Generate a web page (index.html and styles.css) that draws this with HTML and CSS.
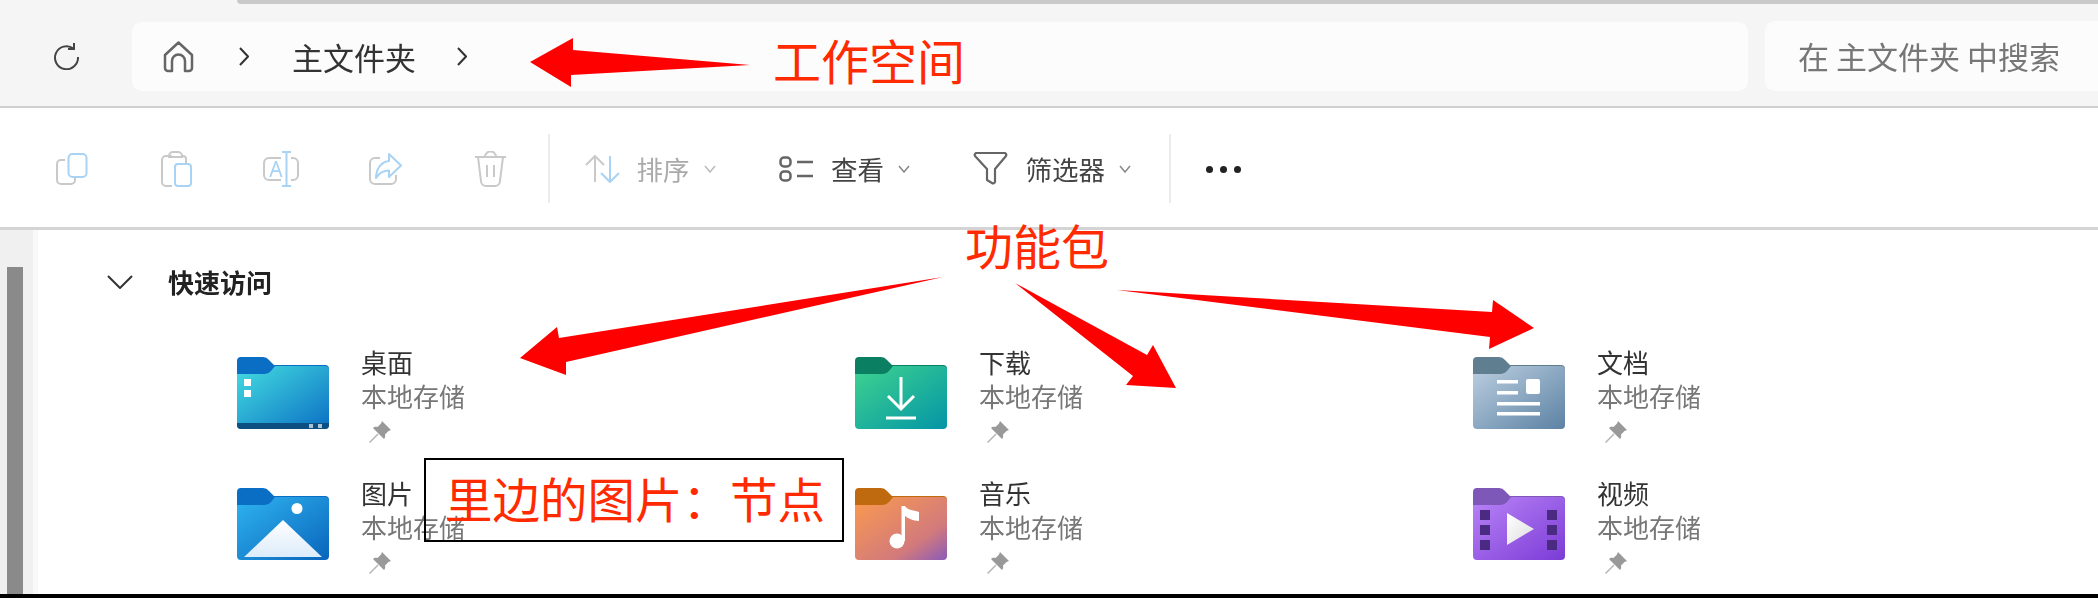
FILE: index.html

```html
<!DOCTYPE html>
<html lang="zh-CN">
<head>
  <meta charset="UTF-8">
  <title>主文件夹</title>
  <link rel="stylesheet" href="styles.css">
</head>
<body>
  <div class="topbar">
    <div class="tab-edge"></div>
    <div class="nav-row">
      <svg class="refresh" width="27" height="28" viewBox="0 0 27 28" fill="none" stroke="#444" stroke-width="2">
        <path d="M20.4 6.5A11.5 11.5 0 1 0 25 15"/>
        <path d="M21 1V7H15"/>
      </svg>
      <div class="address">
        <svg width="31" height="32" viewBox="0 0 31 32" fill="none" stroke="#666" stroke-width="2.5" stroke-linejoin="round">
          <path d="M2 14 15.5 1.5 29 14V27a3 3 0 0 1-3 3H22V20a6.5 6.5 0 0 0-13 0V30H5a3 3 0 0 1-3-3Z"/>
        </svg>
        <svg class="crumb-1" width="10" height="19" viewBox="0 0 10 19" fill="none" stroke="#333" stroke-width="2"><path d="M1 1 9 9.5 1 18"/></svg>
        <span class="crumb-text">主文件夹</span>
        <svg class="crumb-2" width="10" height="19" viewBox="0 0 10 19" fill="none" stroke="#333" stroke-width="2"><path d="M1 1 9 9.5 1 18"/></svg>
      </div>
      <div class="search">在 主文件夹 中搜索</div>
    </div>
  </div>

  <div class="toolbar">
    <div class="tool">
      <svg width="32" height="32" viewBox="0 0 32 32" fill="none" stroke-width="2">
        <path stroke="#c9c9c9" d="M9 7H5a4 4 0 0 0-4 4V27a4 4 0 0 0 4 4H15a4 4 0 0 0 4-4V25"/>
        <rect stroke="#a8d3f4" x="12.5" y="1" width="18" height="23" rx="4"/>
      </svg>
    </div>
    <div class="tool">
      <svg width="31" height="36" viewBox="0 0 31 36" fill="none" stroke-width="2">
        <path stroke="#c9c9c9" d="M11 5H5a4 4 0 0 0-4 4V31a4 4 0 0 0 4 4h6M20 5h2a3 3 0 0 1 3 3v4M8 5a4 4 0 0 1 4-4h5a4 4 0 0 1 4 4v1H8Z"/>
        <rect stroke="#a8d3f4" x="14" y="13" width="16" height="22" rx="3"/>
      </svg>
    </div>
    <div class="tool">
      <svg width="36" height="36" viewBox="0 0 36 36" fill="none" stroke-width="2">
        <path stroke="#c9c9c9" d="M18 7H6a5 5 0 0 0-5 5V24a5 5 0 0 0 5 5H18M28 7h2a5 5 0 0 1 5 5V24a5 5 0 0 1-5 5H28"/>
        <path stroke="#a8d3f4" d="M19 1H28M23.500 1V35M19 35H28"/>
        <text class="rename-a" x="13" y="26" text-anchor="middle">A</text>
      </svg>
    </div>
    <div class="tool">
      <svg width="33" height="32" viewBox="0 0 33 32" fill="none" stroke-width="2">
        <path stroke="#c9c9c9" d="M11 5H6a5 5 0 0 0-5 5V26a5 5 0 0 0 5 5H22a5 5 0 0 0 5-5V22"/>
        <path stroke="#a8d3f4" stroke-linejoin="round" d="M20 1 32 12.500 20 24V17.500C14 17.500 10 20 7 25 7 16 12 9 20 8Z"/>
      </svg>
    </div>
    <div class="tool">
      <svg width="33" height="36" viewBox="0 0 33 36" fill="none" stroke="#c9c9c9" stroke-width="2">
        <path d="M1 6H32M11 6a5.500 5.500 0 0 1 11 0M4 6 7 30a5 5 0 0 0 5 5H21a5 5 0 0 0 5-5L29 6M13 14V26M20 14V26"/>
      </svg>
    </div>
    <div class="separator"></div>
    <div class="menu menu-sort">
      <svg width="35" height="28" viewBox="0 0 35 28" fill="none" stroke-width="2">
        <path stroke="#c9c9c9" d="M1 10 10 1 19 10M10 1V27"/>
        <path stroke="#a8d3f4" d="M16 18 25 27 34 18M25 1V27"/>
      </svg>
      <span class="menu-label disabled">排序</span>
      <svg class="caret" width="12" height="8" viewBox="0 0 12 8" fill="none" stroke="#bbb" stroke-width="1.500"><path d="M1 1 6 7 11 1"/></svg>
    </div>
    <div class="menu">
      <svg width="35" height="26" viewBox="0 0 35 26" fill="none" stroke="#666" stroke-width="2.500">
        <rect x="1.500" y="1.500" width="10" height="9" rx="3.500"/>
        <rect x="1.500" y="15.500" width="10" height="9" rx="3.500"/>
        <path d="M18 6H34M18 20H34"/>
      </svg>
      <span class="menu-label">查看</span>
      <svg class="caret" width="12" height="8" viewBox="0 0 12 8" fill="none" stroke="#888" stroke-width="1.500"><path d="M1 1 6 7 11 1"/></svg>
    </div>
    <div class="menu">
      <svg width="35" height="33" viewBox="0 0 35 33" fill="none" stroke="#666" stroke-width="2.200" stroke-linejoin="round">
        <path d="M4 1H31a2 2 0 0 1 2 3L22 17V30a2 2 0 0 1-3 1L14 28V17L2 4A2 2 0 0 1 4 1Z"/>
      </svg>
      <span class="menu-label">筛选器</span>
      <svg class="caret" width="12" height="8" viewBox="0 0 12 8" fill="none" stroke="#888" stroke-width="1.500"><path d="M1 1 6 7 11 1"/></svg>
    </div>
    <div class="separator separator-2"></div>
    <div class="dots"><i></i><i></i><i></i></div>
  </div>

  <div class="main">
    <div class="rail"><div class="thumb"></div></div>
    <div class="rail-edge"></div>
    <div class="content">
      <div class="section-head">
        <svg width="26" height="14" viewBox="0 0 26 14" fill="none" stroke="#333" stroke-width="2"><path d="M1 1 13 13 25 1"/></svg>
        <span class="section-title">快速访问</span>
      </div>
      <div class="grid">
        <div class="item">
          <svg class="folder" width="92" height="72" viewBox="0 0 92 72">
            <defs><linearGradient id="g-desk" x1="0" y1="0" x2="1" y2="1"><stop offset="0" stop-color="#44dde0"/><stop offset="1" stop-color="#0b6fc4"/></linearGradient></defs>
            <path fill="#0a6ec4" d="M4 0H26a8 8 0 0 1 6 3L37 8H88a4 4 0 0 1 4 4V30H0V4A4 4 0 0 1 4 0Z"/>
            <path fill="url(#g-desk)" d="M0 17H28a8 8 0 0 0 6-3L38 9H88a4 4 0 0 1 4 4V68a4 4 0 0 1-4 4H4a4 4 0 0 1-4-4Z"/>
            <path fill="#0c4f80" d="M0 66H92V68a4 4 0 0 1-4 4H4a4 4 0 0 1-4-4Z"/>
            <rect fill="#fff" x="7" y="22" width="7" height="7"/>
            <rect fill="#fff" x="7" y="33" width="7" height="7"/>
            <rect fill="#a9c4d6" x="72" y="67" width="4" height="4"/>
            <rect fill="#a9c4d6" x="81" y="67" width="4" height="4"/>
          </svg>
          <div class="item-text">
            <div class="item-name">桌面</div>
            <div class="item-sub">本地存储</div>
            <svg class="pin" width="22" height="22" viewBox="0 0 22 22"><path fill="#999" d="M13 0 22 9 19.500 10 16 13.500C16.500 15.500 16 17 15 18L4 7C5 6 6.500 5.500 8.500 6L12 2.500Z"/><path stroke="#b5b5b5" stroke-width="1.500" d="M9 13 .5 21.500"/></svg>
          </div>
        </div>
        <div class="item">
          <svg class="folder" width="92" height="72" viewBox="0 0 92 72">
            <defs><linearGradient id="g-down" x1="0" y1="0" x2="1" y2="1"><stop offset="0" stop-color="#3fd38f"/><stop offset="1" stop-color="#0395a6"/></linearGradient></defs>
            <path fill="#0a7f62" d="M4 0H26a8 8 0 0 1 6 3L37 8H88a4 4 0 0 1 4 4V30H0V4A4 4 0 0 1 4 0Z"/>
            <path fill="url(#g-down)" d="M0 17H28a8 8 0 0 0 6-3L38 9H88a4 4 0 0 1 4 4V68a4 4 0 0 1-4 4H4a4 4 0 0 1-4-4Z"/>
            <path fill="none" stroke="#fff" stroke-width="3" d="M46 20V52M33 39 46 52 59 39M31 61H61"/>
          </svg>
          <div class="item-text">
            <div class="item-name">下载</div>
            <div class="item-sub">本地存储</div>
            <svg class="pin" width="22" height="22" viewBox="0 0 22 22"><path fill="#999" d="M13 0 22 9 19.500 10 16 13.500C16.500 15.500 16 17 15 18L4 7C5 6 6.500 5.500 8.500 6L12 2.500Z"/><path stroke="#b5b5b5" stroke-width="1.500" d="M9 13 .5 21.500"/></svg>
          </div>
        </div>
        <div class="item">
          <svg class="folder" width="92" height="72" viewBox="0 0 92 72">
            <defs><linearGradient id="g-docs" x1="0" y1="0" x2="1" y2="1"><stop offset="0" stop-color="#bccfe0"/><stop offset="1" stop-color="#5c82a4"/></linearGradient></defs>
            <path fill="#5f7f90" d="M4 0H26a8 8 0 0 1 6 3L37 8H88a4 4 0 0 1 4 4V30H0V4A4 4 0 0 1 4 0Z"/>
            <path fill="url(#g-docs)" d="M0 17H28a8 8 0 0 0 6-3L38 9H88a4 4 0 0 1 4 4V68a4 4 0 0 1-4 4H4a4 4 0 0 1-4-4Z"/>
            <g fill="#fff">
              <rect x="24" y="23" width="21" height="3.500"/>
              <rect x="24" y="34" width="21" height="3.500"/>
              <rect x="53" y="22" width="14" height="15" rx="2"/>
              <rect x="24" y="45" width="43" height="3.500"/>
              <rect x="24" y="55" width="43" height="3.500"/>
            </g>
          </svg>
          <div class="item-text">
            <div class="item-name">文档</div>
            <div class="item-sub">本地存储</div>
            <svg class="pin" width="22" height="22" viewBox="0 0 22 22"><path fill="#999" d="M13 0 22 9 19.500 10 16 13.500C16.500 15.500 16 17 15 18L4 7C5 6 6.500 5.500 8.500 6L12 2.500Z"/><path stroke="#b5b5b5" stroke-width="1.500" d="M9 13 .5 21.500"/></svg>
          </div>
        </div>
        <div class="item">
          <svg class="folder" width="92" height="72" viewBox="0 0 92 72">
            <defs>
              <linearGradient id="g-pics" x1="0" y1="0" x2="1" y2="1"><stop offset="0" stop-color="#2fb4f0"/><stop offset="1" stop-color="#0964bb"/></linearGradient>
              <linearGradient id="g-peak" x1="0" y1="0" x2="0" y2="1"><stop offset="0" stop-color="#fff"/><stop offset="1" stop-color="#dcecfa"/></linearGradient>
            </defs>
            <path fill="#0a6ec4" d="M4 0H26a8 8 0 0 1 6 3L37 8H88a4 4 0 0 1 4 4V30H0V4A4 4 0 0 1 4 0Z"/>
            <path fill="url(#g-pics)" d="M0 17H28a8 8 0 0 0 6-3L38 9H88a4 4 0 0 1 4 4V68a4 4 0 0 1-4 4H4a4 4 0 0 1-4-4Z"/>
            <circle fill="#fff" cx="60" cy="20.500" r="5.500"/>
            <path fill="url(#g-peak)" d="M46 32 85 69H7Z"/>
          </svg>
          <div class="item-text">
            <div class="item-name">图片</div>
            <div class="item-sub">本地存储</div>
            <svg class="pin" width="22" height="22" viewBox="0 0 22 22"><path fill="#999" d="M13 0 22 9 19.500 10 16 13.500C16.500 15.500 16 17 15 18L4 7C5 6 6.500 5.500 8.500 6L12 2.500Z"/><path stroke="#b5b5b5" stroke-width="1.500" d="M9 13 .5 21.500"/></svg>
          </div>
        </div>
        <div class="item">
          <svg class="folder" width="92" height="72" viewBox="0 0 92 72">
            <defs><linearGradient id="g-music" x1="0" y1="0" x2="1" y2="1"><stop offset="0" stop-color="#fb9a4e"/><stop offset=".7" stop-color="#d27a7c"/><stop offset="1" stop-color="#8a5bb8"/></linearGradient></defs>
            <path fill="#c06a10" d="M4 0H26a8 8 0 0 1 6 3L37 8H88a4 4 0 0 1 4 4V30H0V4A4 4 0 0 1 4 0Z"/>
            <path fill="url(#g-music)" d="M0 17H28a8 8 0 0 0 6-3L38 9H88a4 4 0 0 1 4 4V68a4 4 0 0 1-4 4H4a4 4 0 0 1-4-4Z"/>
            <circle fill="#fff" cx="42" cy="53" r="7.500"/>
            <path fill="#fff" d="M46.500 53V18L50 18C52 22 58 22 64 24V33C58 33 53 30 50 28V53Z"/>
          </svg>
          <div class="item-text">
            <div class="item-name">音乐</div>
            <div class="item-sub">本地存储</div>
            <svg class="pin" width="22" height="22" viewBox="0 0 22 22"><path fill="#999" d="M13 0 22 9 19.500 10 16 13.500C16.500 15.500 16 17 15 18L4 7C5 6 6.500 5.500 8.500 6L12 2.500Z"/><path stroke="#b5b5b5" stroke-width="1.500" d="M9 13 .5 21.500"/></svg>
          </div>
        </div>
        <div class="item">
          <svg class="folder" width="92" height="72" viewBox="0 0 92 72">
            <defs>
              <linearGradient id="g-video" x1="0" y1="0" x2="1" y2="1"><stop offset="0" stop-color="#b984f7"/><stop offset="1" stop-color="#7b3bd6"/></linearGradient>
              <linearGradient id="g-play" x1="0" y1="0" x2="1" y2="1"><stop offset="0" stop-color="#fff"/><stop offset="1" stop-color="#ddd"/></linearGradient>
            </defs>
            <path fill="#7e58b8" d="M4 0H26a8 8 0 0 1 6 3L37 8H88a4 4 0 0 1 4 4V30H0V4A4 4 0 0 1 4 0Z"/>
            <path fill="url(#g-video)" d="M0 17H28a8 8 0 0 0 6-3L38 9H88a4 4 0 0 1 4 4V68a4 4 0 0 1-4 4H4a4 4 0 0 1-4-4Z"/>
            <g fill="#4b2b82">
              <rect x="7" y="22" width="10" height="10"/>
              <rect x="7" y="37" width="10" height="10"/>
              <rect x="7" y="52" width="10" height="10"/>
              <rect x="74" y="22" width="10" height="10"/>
              <rect x="74" y="37" width="10" height="10"/>
              <rect x="74" y="52" width="10" height="10"/>
            </g>
            <path fill="url(#g-play)" d="M34 25 61 41 34 57Z"/>
          </svg>
          <div class="item-text">
            <div class="item-name">视频</div>
            <div class="item-sub">本地存储</div>
            <svg class="pin" width="22" height="22" viewBox="0 0 22 22"><path fill="#999" d="M13 0 22 9 19.500 10 16 13.500C16.500 15.500 16 17 15 18L4 7C5 6 6.500 5.500 8.500 6L12 2.500Z"/><path stroke="#b5b5b5" stroke-width="1.500" d="M9 13 .5 21.500"/></svg>
          </div>
        </div>
      </div>
    </div>
  </div>
  <div class="bottom-line"></div>

  <!-- red annotations drawn on top of the screenshot -->
  <svg class="arrows" width="2098" height="598" viewBox="0 0 2098 598">
    <path d="M750 65 573 50 573 38 530 62 571 87 571 75Z"/>
    <path d="M943 277 559 338 557 327 520 358 566 375 566 362Z"/>
    <path d="M1015 283 1147 355 1153 345 1176 388 1126 385 1133 376Z"/>
    <path d="M1117 290 1492 312 1493 300 1534 328 1489 349 1490 337Z"/>
  </svg>
  <div class="note note-work">工作空间</div>
  <div class="note note-pack">功能包</div>
  <div class="note note-node">里边的图片：节点</div>
</body>
</html>
```

FILE: styles.css

```css
* { box-sizing: border-box; }
html, body { margin: 0; padding: 0; }
body { width: 2098px; height: 598px; overflow: hidden; position: relative; background: #fff; font-family: "Noto Sans CJK SC", "Noto Sans", sans-serif; color: #333; }
svg { display: block; flex: none; }

.topbar { height: 108px; background: #f5f5f5; border-bottom: 2px solid #cfcfcf; }
.tab-edge { height: 4px; margin-left: 237px; background: #c9c9c9; border-bottom-left-radius: 4px; }
.nav-row { display: flex; align-items: flex-start; padding: 17px 0 0 53px; filter: blur(.4px); }
.refresh { margin-top: 21px; }
.address { display: flex; align-items: center; width: 1616px; height: 69px; margin: 1px 0 0 52px; padding-left: 31px; background: #fcfcfc; border-radius: 10px; }
.crumb-1 { margin-left: 45px; }
.crumb-text { margin-left: 43px; font-size: 31px; line-height: 40px; color: #333; }
.crumb-2 { margin-left: 41px; }
.search { flex: 1; height: 70px; margin-left: 17px; padding-left: 33px; background: #fcfcfc; border-radius: 10px 0 0 10px; font-size: 31px; line-height: 70px; color: #777; }

.toolbar { display: flex; align-items: center; height: 122px; padding: 2px 0 0 20px; background: #fff; border-bottom: 3px solid #d4d4d4; }
.tool { display: flex; justify-content: center; width: 104.5px; filter: blur(.4px); }
.rename-a { font-family: "Noto Sans", sans-serif; font-size: 21px; fill: #a8d3f4; }
.separator { width: 2px; height: 69px; margin-left: 5.5px; background: #ebebeb; }
.separator-2 { margin-left: 38px; }
.menu { display: flex; align-items: center; margin-left: 63px; filter: blur(.4px); }
.menu-sort { margin-left: 35px; }
.menu-label { margin-left: 17.5px; font-size: 26.5px; line-height: 34px; color: #444; }
.menu-sort .menu-label { margin-left: 16.5px; }
.disabled { color: #aaa; }
.caret { margin-left: 14px; }
.dots { display: flex; gap: 7px; margin: 1px 0 0 35px; filter: blur(.4px); }
.dots i { width: 7px; height: 7px; border-radius: 50%; background: #222; }

.main { display: flex; height: 364px; }
.rail { width: 33px; padding: 37px 0 0 7px; background: #f0f0f0; }
.thumb { width: 16px; height: 327px; background: #8a8a8a; }
.rail-edge { width: 5px; background: #f9f9f9; }
.content { flex: 1; padding-top: 35px; filter: blur(.4px); }
.section-head { display: flex; align-items: center; height: 34px; margin: 0 0 47px 69px; }
.section-title { margin-left: 35px; font-size: 26px; line-height: 34px; font-weight: 700; color: #222; }
.grid { display: grid; grid-template-columns: repeat(3, 618px); grid-auto-rows: 131px; padding-left: 199px; }
.item { display: flex; align-items: flex-start; }
.folder { margin-top: 11px; }
.item-text { margin: -1px 0 0 32px; }
.item-name { font-size: 26px; line-height: 34px; color: #333; }
.item-sub { font-size: 26px; line-height: 34px; color: #777; }
.pin { margin: 8px 0 0 8px; }

.bottom-line { height: 4px; background: #000; }

.arrows { position: absolute; left: 0; top: 0; fill: #ff0000; }
.note { position: absolute; font-size: 48px; line-height: 60px; color: #ff2a00; white-space: nowrap; }
.note-work { left: 773px; top: 29px; }
.note-pack { left: 965px; top: 214px; }
.note-node { left: 424px; top: 458px; width: 420px; height: 84px; padding: 8px 0 0 19px; border: 2px solid #000; font-size: 47.5px; }
```
